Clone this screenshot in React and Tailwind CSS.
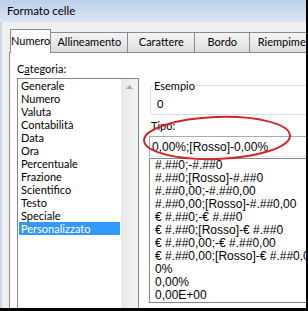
const categorie = [
  'Generale',
  'Numero',
  'Valuta',
  'Contabilità',
  'Data',
  'Ora',
  'Percentuale',
  'Frazione',
  'Scientifico',
  'Testo',
  'Speciale',
  'Personalizzato',
];

const formati = [
  '#.##0;-#.##0',
  '#.##0;[Rosso]-#.##0',
  '#.##0,00;-#.##0,00',
  '#.##0,00;[Rosso]-#.##0,00',
  '€ #.##0;-€ #.##0',
  '€ #.##0;[Rosso]-€ #.##0',
  '€ #.##0,00;-€ #.##0,00',
  '€ #.##0,00;[Rosso]-€ #.##0,00',
  '0%',
  '0,00%',
  '0,00E+00',
];

const tabs = [
  { label: 'Allineamento', w: 'w-[77px]' },
  { label: 'Carattere', w: 'w-[67px]' },
  { label: 'Bordo', w: 'w-[55px]' },
  { label: 'Riempimento', w: 'w-[80px]' },
];

export default function App() {
  return (
    <div className="relative w-[308px] h-[311px] bg-black overflow-hidden">
      <div className="flex flex-col w-[306px] h-[308px] bg-[#f0f0f0] overflow-hidden font-['Lato',sans-serif] text-[11px] text-black">
        {/* barra titolo */}
        <div className="h-[22px] shrink-0 flex items-center pl-[7px] bg-gradient-to-b from-[#bcd0e9] to-[#dbe6f4] text-[11.5px] leading-none">
          Formato celle
        </div>

        <div className="flex-1 min-h-0 flex flex-col pl-[7px] pt-[7px] border-l-2 border-[#c9d7e8]">
          {/* schede */}
          <div className="relative z-10 flex items-end h-[23px] pl-[1px] shrink-0">
            <div className="h-[24px] w-[54px] -mb-px bg-white border border-b-0 border-[#898c95] flex items-center justify-center pb-[1px]">
              Numero
            </div>
            {tabs.map((t) => (
              <div
                key={t.label}
                className={`${t.w} h-[20px] shrink-0 border-t border-r border-[#898c95] bg-gradient-to-b from-[#f3f3f3] via-[#ebebeb] to-[#dcdcdc] flex items-center justify-center whitespace-nowrap overflow-hidden`}
              >
                {t.label}
              </div>
            ))}
          </div>

          {/* pannello */}
          <div className="flex-1 min-h-0 flex gap-[10px] pl-[7px] bg-white border-l border-t border-[#898c95] overflow-hidden">
            {/* categoria */}
            <div className="w-[122px] shrink-0 flex flex-col">
              <div className="pt-[8px] leading-[15px]">
                C<span className="underline">a</span>tegoria:
              </div>
              <div className="mt-[2px] h-[250px] shrink-0 flex border border-[#828790]">
                <div className="flex-1 flex flex-col pl-[1px] leading-[13px]">
                  {categorie.map((c) => (
                    <div
                      key={c}
                      className={
                        c === 'Personalizzato'
                          ? 'pl-[2px] mr-[1px] bg-[#3399ff] text-white'
                          : 'pl-[2px]'
                      }
                    >
                      {c}
                    </div>
                  ))}
                </div>
                <div className="w-[17px] shrink-0 flex justify-center pt-[6px] bg-gradient-to-r from-[#e8e8e8] to-[#f4f4f4]">
                  <svg width="7" height="4" viewBox="0 0 7 4">
                    <polygon points="0,4 3.5,0 7,4" fill="#a9a9a9" />
                  </svg>
                </div>
              </div>
            </div>

            {/* destra */}
            <div className="w-[180px] shrink-0 flex flex-col">
              <fieldset className="mt-[25px] ml-[1px] border border-[#d5dfe5] rounded-[3px] pl-[2px] pb-[3px]">
                <legend className="px-[1px] leading-[15px]">Esempio</legend>
                <div className="pt-[3px] pl-[4px] leading-[15px]">0</div>
              </fieldset>

              <div className="mt-[3px] ml-[2px] leading-[15px]">Tipo:</div>

              <div className="mt-[3px] h-[21px] shrink-0 flex items-center pl-[2px] border border-[#abadb3] border-b-[#e3e9ef] border-r-[#dbdfe6] font-['Liberation_Sans',sans-serif] text-[12px]">
                0,00%;[Rosso]-0,00%
              </div>

              <div className="mt-[1px] h-[145px] shrink-0 border border-[#828790] pl-[5px] leading-[13px] font-['Liberation_Sans',sans-serif] text-[12px] whitespace-nowrap overflow-hidden">
                {formati.map((f) => (
                  <div key={f}>{f}</div>
                ))}
              </div>
            </div>
          </div>
        </div>
      </div>

      <svg className="absolute left-0 top-0 pointer-events-none" width="308" height="311">
        <ellipse
          cx="217"
          cy="138"
          rx="73"
          ry="21"
          fill="none"
          stroke="#d0252b"
          strokeWidth="2"
          transform="rotate(-2 217 138)"
        />
      </svg>
    </div>
  );
}
